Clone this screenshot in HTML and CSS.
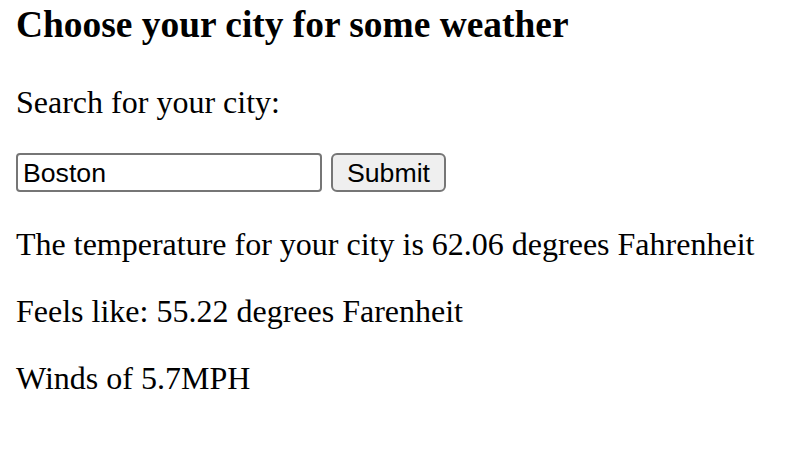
FILE: index.html
```html
<!DOCTYPE html>
<html lang="en">
<head>
<meta charset="utf-8">
<title>Weather</title>
<link rel="stylesheet" href="styles.css">
</head>
<body>
<h3 class="title">Choose your city for some weather</h3>
<p class="prompt">Search for your city:</p>
<form class="search">
  <input class="city" type="text" value="Boston">
  <button class="submit" type="button">Submit</button>
</form>
<p class="line">The temperature for your city is 62.06 degrees Fahrenheit</p>
<p class="line">Feels like: 55.22 degrees Farenheit</p>
<p class="line">Winds of 5.7MPH</p>
</body>
</html>
```
FILE: styles.css
```css
html, body {
  background: #ffffff;
}
body {
  margin: 0;
  padding: 3px 16px 0;
  font-family: "Liberation Serif", "Times New Roman", serif;
  font-size: 32px;
  line-height: 36px;
  color: #000000;
}
.title {
  margin: 0 0 38px;
  font-size: 37.44px;
  line-height: 43px;
  font-weight: bold;
}
.prompt {
  margin: 0 0 33px;
}
.search {
  display: flex;
  align-items: center;
  gap: 9px;
  height: 39px;
  margin: 0 0 34px;
}
.city {
  box-sizing: border-box;
  width: 306px;
  height: 39px;
  margin: 0;
  padding: 1px 5px 0;
  border: 2px solid #767676;
  border-radius: 4px;
  background: #ffffff;
  font-family: "Liberation Sans", Arial, sans-serif;
  font-size: 26.67px;
  color: #000000;
  outline: none;
}
.submit {
  box-sizing: border-box;
  width: 115px;
  height: 39px;
  margin: 0;
  padding: 1px 0 0;
  border: 2px solid #767676;
  border-radius: 6px;
  background: #efefef;
  font-family: "Liberation Sans", Arial, sans-serif;
  font-size: 26.67px;
  color: #000000;
}
.line {
  margin: 0 0 31px;
}
```
